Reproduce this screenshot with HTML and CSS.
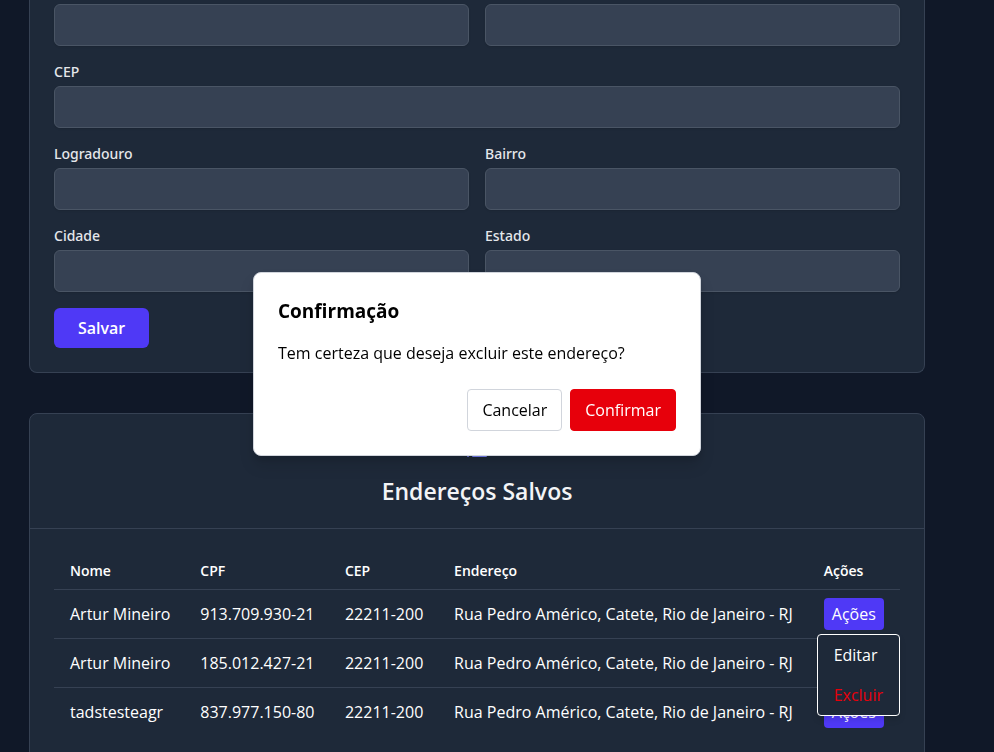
FILE: index.html
```
<!DOCTYPE html>
<html lang="pt-BR">
<head>
<meta charset="utf-8">
<meta name="viewport" content="width=device-width, initial-scale=1">
<title>Endereços</title>
<link rel="stylesheet" href="styles.css">
</head>
<body>
<main class="page">
  <section class="card card-form">
    <form class="form">
      <div class="row">
        <input class="input" type="text" aria-label="Nome">
        <input class="input" type="text" aria-label="CPF">
      </div>
      <div class="field">
        <label for="cep">CEP</label>
        <input class="input" id="cep" type="text">
      </div>
      <div class="row">
        <div class="field">
          <label for="logradouro">Logradouro</label>
          <input class="input" id="logradouro" type="text">
        </div>
        <div class="field">
          <label for="bairro">Bairro</label>
          <input class="input" id="bairro" type="text">
        </div>
      </div>
      <div class="row">
        <div class="field">
          <label for="cidade">Cidade</label>
          <input class="input" id="cidade" type="text">
        </div>
        <div class="field">
          <label for="estado">Estado</label>
          <input class="input" id="estado" type="text">
        </div>
      </div>
      <button class="save" type="button">Salvar</button>
    </form>
  </section>

  <section class="card">
    <header class="card-header">
      <svg class="icon" viewBox="0 0 24 24" width="24" height="24" fill="none" stroke="currentColor" stroke-width="2" stroke-linecap="round" stroke-linejoin="round" aria-hidden="true">
        <path d="M3 6h.01M3 12h.01M3 18h.01M8 6h13M8 12h13M8 18h13"/>
      </svg>
      <h2>Endereços Salvos</h2>
    </header>
    <div class="card-body">
      <table class="table">
        <colgroup>
          <col class="col-name"><col class="col-cpf"><col class="col-cep"><col><col class="col-actions">
        </colgroup>
        <thead>
          <tr><th>Nome</th><th>CPF</th><th>CEP</th><th>Endereço</th><th>Ações</th></tr>
        </thead>
        <tbody>
          <tr>
            <td>Artur Mineiro</td><td>913.709.930-21</td><td>22211-200</td>
            <td>Rua Pedro Américo, Catete, Rio de Janeiro - RJ</td>
            <td class="actions">
              <button class="action" type="button">Ações</button>
              <div class="menu">
                <button type="button">Editar</button>
                <button class="danger" type="button">Excluir</button>
              </div>
            </td>
          </tr>
          <tr>
            <td>Artur Mineiro</td><td>185.012.427-21</td><td>22211-200</td>
            <td>Rua Pedro Américo, Catete, Rio de Janeiro - RJ</td>
            <td><button class="action" type="button">Ações</button></td>
          </tr>
          <tr>
            <td>tadstesteagr</td><td>837.977.150-80</td><td>22211-200</td>
            <td>Rua Pedro Américo, Catete, Rio de Janeiro - RJ</td>
            <td><button class="action" type="button">Ações</button></td>
          </tr>
        </tbody>
      </table>
    </div>
  </section>
</main>

<div class="overlay">
  <div class="dialog" role="dialog" aria-modal="true" aria-labelledby="dialog-title">
    <h3 id="dialog-title">Confirmação</h3>
    <p>Tem certeza que deseja excluir este endereço?</p>
    <div class="dialog-buttons">
      <button class="btn" type="button">Cancelar</button>
      <button class="btn btn-danger" type="button">Confirmar</button>
    </div>
  </div>
</div>
</body>
</html>
```
FILE: styles.css
```
*, *::before, *::after { box-sizing: border-box; }

body {
  margin: 0;
  height: 100vh;
  overflow: hidden;
  background: #101828;
  color: #fff;
  font-family: "Open Sans", "Noto Sans", sans-serif;
  font-size: 16px;
  line-height: 24px;
}

h2, h3, p { margin: 0; }

button, input { font: inherit; color: inherit; }

.page {
  display: flex;
  flex-direction: column;
  align-items: center;
  gap: 40px;
  padding: 0 69px 0 29px;
}

.card {
  width: 100%;
  max-width: 896px;
  background: #1e2939;
  border: 1px solid #364153;
  border-radius: 8px;
}

.card-form {
  padding: 4px 24px 24px;
  border-top: 0;
  border-radius: 0 0 8px 8px;
}

.form {
  display: flex;
  flex-direction: column;
  gap: 16px;
}

.row {
  display: grid;
  grid-template-columns: 1fr 1fr;
  gap: 16px;
}

.field {
  display: flex;
  flex-direction: column;
  gap: 4px;
}

.field label {
  color: #e5e7eb;
  font-family: "Noto Sans", sans-serif;
  font-size: 14px;
  font-weight: 500;
  line-height: 20px;
}

.input {
  width: 100%;
  height: 42px;
  padding: 8px 12px;
  background: #364153;
  border: 1px solid #4a5565;
  border-radius: 6px;
  box-shadow: 0 1px 2px rgba(0, 0, 0, 0.1);
}

.save {
  align-self: flex-start;
  padding: 8px 24px;
  background: #4f39f6;
  border: 0;
  border-radius: 6px;
  font-weight: 600;
}

.card-header {
  display: flex;
  flex-direction: column;
  align-items: center;
  gap: 16px;
  padding: 24px;
  border-bottom: 1px solid #364153;
}

.card-header h2 {
  color: #f3f4f6;
  font-size: 23px;
  font-weight: 600;
  line-height: 26px;
}

.icon { color: #7c86ff; }

.card-body { padding: 24px; }

.table {
  width: 100%;
  table-layout: fixed;
  border-collapse: separate;
  border-spacing: 0;
  white-space: nowrap;
}

.col-name { width: 15.4%; }
.col-cpf { width: 17.1%; }
.col-cep { width: 12.9%; }
.col-actions { width: 10.9%; }

.table th, .table td {
  padding: 8px 16px;
  border-bottom: 1px solid #364153;
  text-align: left;
}

.table th {
  font-size: 14px;
  font-weight: 600;
  line-height: 20px;
}

.table tr:last-child td { border-bottom: 0; }

.table .actions { position: relative; }

.action {
  display: block;
  padding: 4px 8px;
  background: #4f39f6;
  border: 0;
  border-radius: 4px;
}

.menu {
  position: absolute;
  top: 44px;
  right: 0;
  z-index: 1;
  background: #1e2939;
  border: 1px solid #fff;
  border-radius: 4px;
  box-shadow: 0 4px 6px rgba(0, 0, 0, 0.1);
}

.menu button {
  display: block;
  width: 100%;
  padding: 8px 16px;
  background: none;
  border: 0;
  text-align: left;
}

.menu .danger { color: #e7000b; }

.overlay {
  position: fixed;
  inset: 0;
  z-index: 2;
  display: flex;
  align-items: center;
  justify-content: center;
  padding: 0 40px 24px 0;
}

.dialog {
  width: 100%;
  max-width: 448px;
  padding: 24px;
  background: #fff;
  border: 1px solid #d1d5dc;
  border-radius: 8px;
  box-shadow: 0 10px 15px rgba(0, 0, 0, 0.1), 0 4px 6px rgba(0, 0, 0, 0.1);
  color: #000;
}

.dialog h3 {
  margin-bottom: 16px;
  font-size: 19px;
  font-weight: 700;
  line-height: 28px;
}

.dialog-buttons {
  display: flex;
  justify-content: flex-end;
  gap: 8px;
  margin-top: 24px;
}

.btn {
  padding: 8px 14px;
  background: #fff;
  border: 1px solid #d1d5dc;
  border-radius: 4px;
}

.btn-danger {
  background: #e7000b;
  border-color: #e7000b;
  color: #fff;
}
```
